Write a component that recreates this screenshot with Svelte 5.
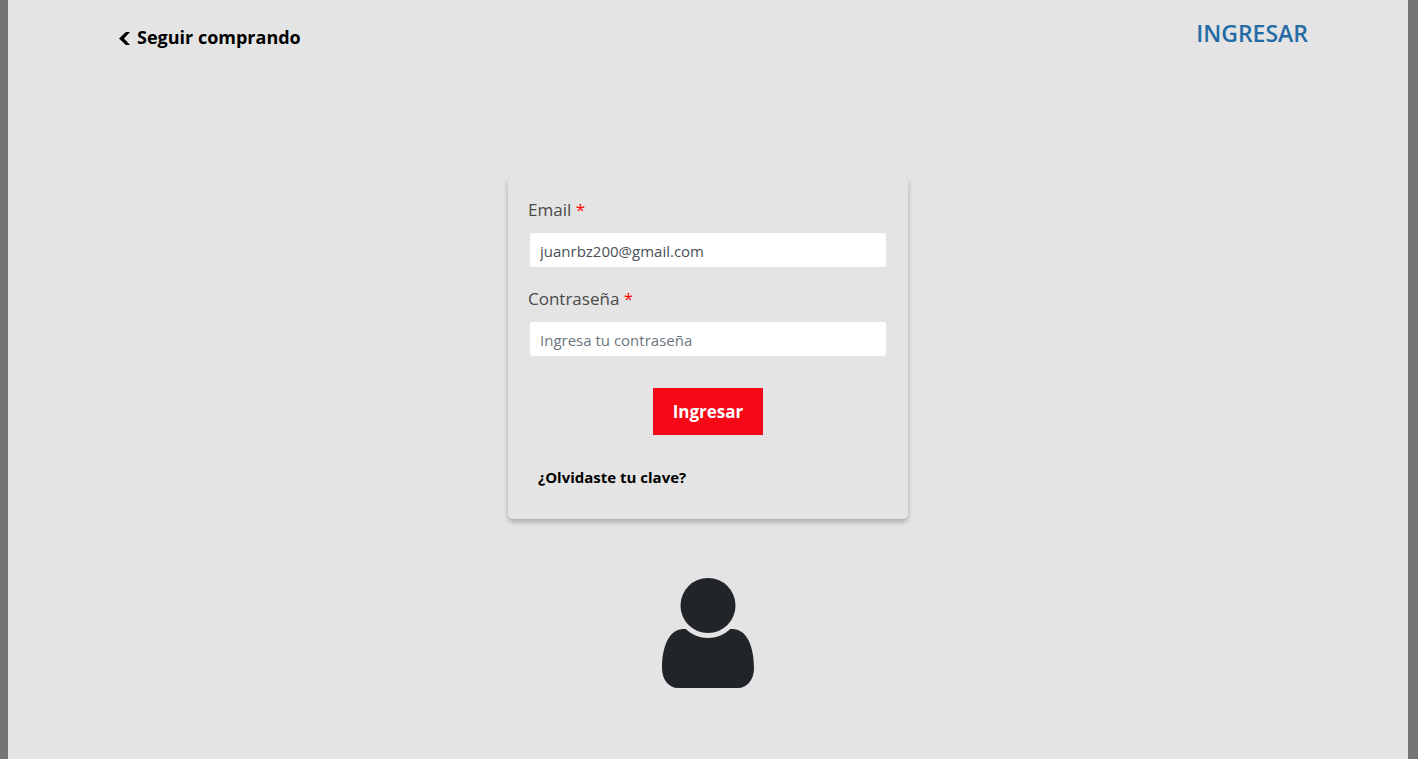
<script>
  let email = $state('juanrbz200@gmail.com');
  let password = $state('');

  function handleSubmit(event) {
    event.preventDefault();
  }
</script>

<div class="page">
  <header>
    <a class="back" href="#tienda">
      <svg viewBox="0 0 12 14" width="12" height="14" aria-hidden="true">
        <path d="M12 1H8L1 7.5L8 14H12L6 7.5Z" />
      </svg>
      Seguir comprando
    </a>
    <a class="login-link" href="#ingresar">INGRESAR</a>
  </header>

  <main>
    <form class="card" onsubmit={handleSubmit}>
      <div class="field">
        <label for="email">Email <span class="required">*</span></label>
        <input id="email" type="email" bind:value={email} />
      </div>
      <div class="field">
        <label for="password">Contraseña <span class="required">*</span></label>
        <input
          id="password"
          type="password"
          placeholder="Ingresa tu contraseña"
          bind:value={password}
        />
      </div>
      <button type="submit">Ingresar</button>
      <a class="forgot" href="#clave">¿Olvidaste tu clave?</a>
    </form>

    <svg class="user" viewBox="0 0 92 110" width="92" height="110" aria-hidden="true">
      <circle cx="46" cy="27.5" r="27.5" />
      <path
        d="M23.6 51A32.5 32.5 0 0 0 68.4 51C84 49.5 92 67 92 90C92 102 85 110 76 110H16C7 110 0 102 0 90C0 67 8 49.5 23.6 51Z"
      />
    </svg>
  </main>
</div>

<style>
  .page {
    box-sizing: border-box;
    min-height: 100vh;
    border-left: 8px solid #757575;
    border-right: 10px solid #757575;
    background: #e4e4e4;
    color: #212529;
    font-family: 'Segoe UI', 'Open Sans', sans-serif;
  }

  a {
    text-decoration: none;
  }

  header {
    display: flex;
    justify-content: space-between;
    align-items: flex-start;
    padding: 15px 100px 0 110px;
  }

  .back {
    display: flex;
    align-items: center;
    gap: 7px;
    padding-top: 9px;
    color: #000;
    font-size: 18px;
    font-weight: 700;
    line-height: 27px;
  }

  .login-link {
    color: #256ca5;
    font-size: 23px;
    font-weight: 600;
    line-height: 36px;
  }

  main {
    display: flex;
    flex-direction: column;
    align-items: center;
    gap: 59px;
    padding: 126px 20px 60px;
  }

  .card {
    box-sizing: border-box;
    display: flex;
    flex-direction: column;
    width: 100%;
    max-width: 400px;
    padding: 20px 20px 30px;
    border-radius: 5px;
    box-shadow: 0 3px 5px rgba(0, 0, 0, 0.25);
  }

  .field {
    display: flex;
    flex-direction: column;
    gap: 10px;
    margin-bottom: 19px;
  }

  label {
    color: #4a4a4a;
    font-size: 17px;
    line-height: 26px;
  }

  .required {
    color: #f00;
  }

  input {
    box-sizing: border-box;
    height: 34px;
    margin: 0 2px;
    padding: 2px 10px 0;
    border: 0;
    border-radius: 2px;
    background: #fff;
    color: #495057;
    font: inherit;
    font-size: 15px;
  }

  input::placeholder {
    color: #6c757d;
    opacity: 1;
  }

  button {
    align-self: center;
    margin: 13px 0 30px;
    padding: 10px 20px;
    border: 0;
    background: #f70816;
    color: #fff;
    font: inherit;
    font-size: 17px;
    font-weight: 700;
    line-height: 27px;
    cursor: pointer;
  }

  .forgot {
    align-self: flex-start;
    margin-left: 10px;
    color: #000;
    font-size: 15px;
    font-weight: 700;
    line-height: 24px;
  }

  .user {
    fill: #212529;
  }
</style>
